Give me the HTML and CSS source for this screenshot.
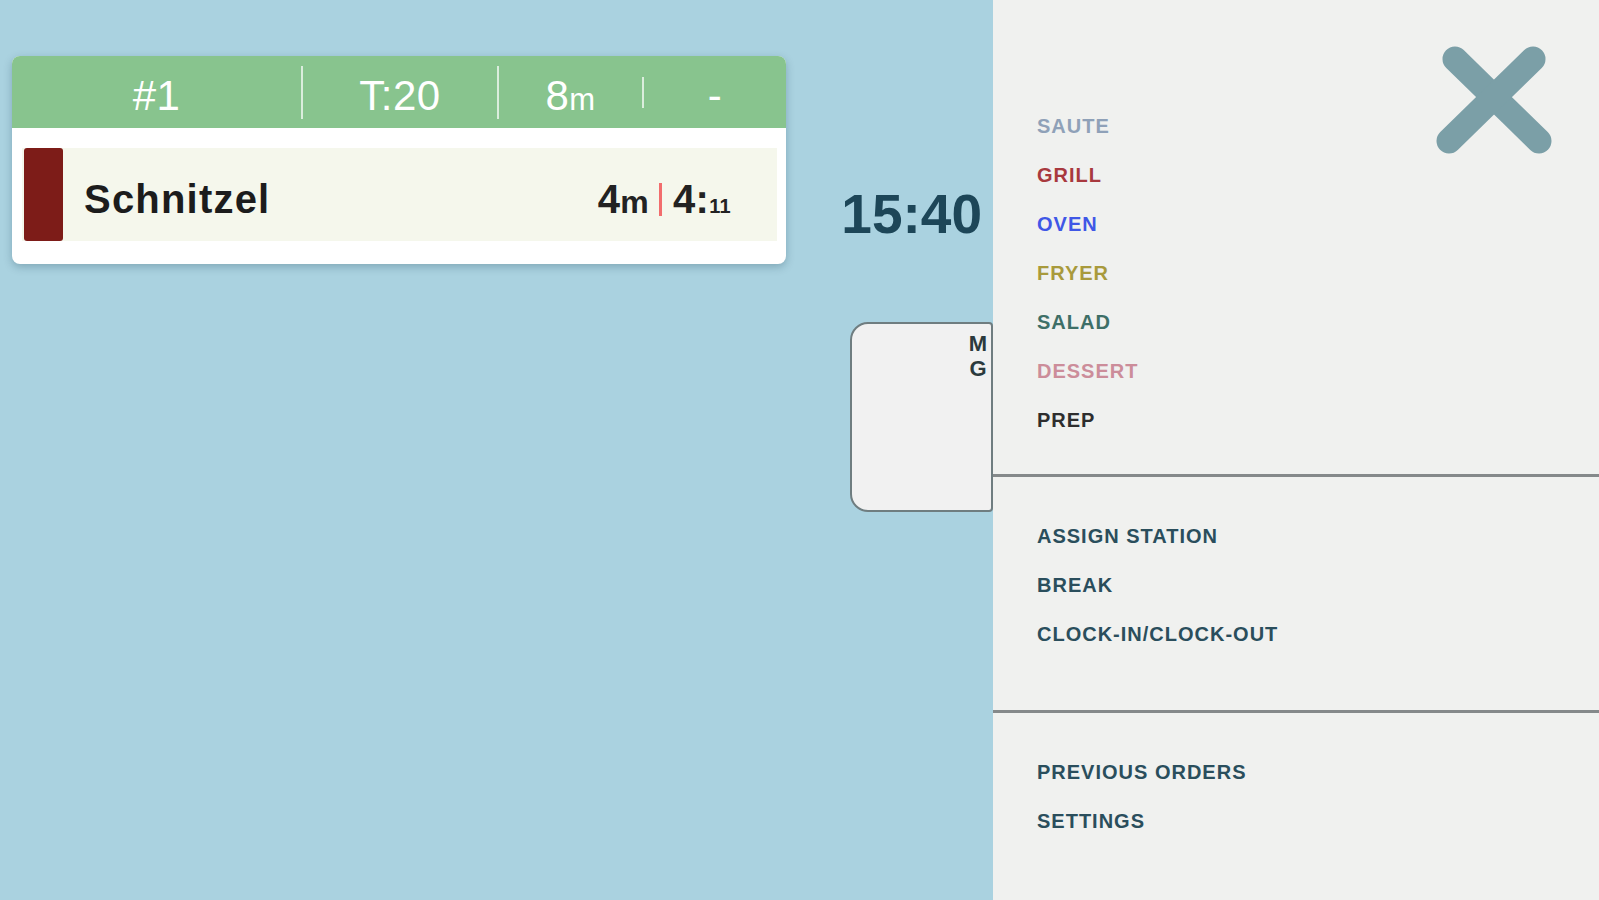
FILE: index.html
```html
<!DOCTYPE html>
<html lang="en">
<head>
<meta charset="utf-8">
<title>Kitchen display</title>
<link rel="stylesheet" href="styles.css">
</head>
<body>
<main class="board">
  <section class="ticket">
    <header class="ticket-head">
      <div class="cell c-num">#1</div>
      <span class="sep"></span>
      <div class="cell c-table">T:20</div>
      <span class="sep"></span>
      <div class="cell c-age">8<span class="unit">m</span></div>
      <span class="sep sep-short"></span>
      <div class="cell c-status">-</div>
    </header>
    <div class="ticket-body">
      <div class="item">
        <span class="item-bar"></span>
        <span class="item-name">Schnitzel</span>
        <span class="item-times">
          <span>4<span class="unit-m">m</span></span>
          <span class="tdiv"></span>
          <span>4:<span class="unit-s">11</span></span>
        </span>
      </div>
    </div>
  </section>
  <section class="col2">
    <div class="clock">15:40</div>
    <div class="tile">
      <span class="tile-tag">M</span>
      <span class="tile-tag">G</span>
    </div>
  </section>
</main>
<aside class="drawer">
  <svg class="close" width="118" height="110" viewBox="0 0 118 110" aria-label="Close">
    <line x1="20" y1="14" x2="104" y2="96" stroke="#7b9fa7" stroke-width="25" stroke-linecap="round"/>
    <line x1="98" y1="14" x2="14" y2="96" stroke="#7b9fa7" stroke-width="25" stroke-linecap="round"/>
  </svg>
  <nav class="group group-stations">
    <a class="menu-item st-saute">SAUTE</a>
    <a class="menu-item st-grill">GRILL</a>
    <a class="menu-item st-oven">OVEN</a>
    <a class="menu-item st-fryer">FRYER</a>
    <a class="menu-item st-salad">SALAD</a>
    <a class="menu-item st-dessert">DESSERT</a>
    <a class="menu-item st-prep">PREP</a>
  </nav>
  <nav class="group">
    <a class="menu-item">ASSIGN STATION</a>
    <a class="menu-item">BREAK</a>
    <a class="menu-item">CLOCK-IN/CLOCK-OUT</a>
  </nav>
  <nav class="group group-last">
    <a class="menu-item">PREVIOUS ORDERS</a>
    <a class="menu-item">SETTINGS</a>
  </nav>
</aside>
</body>
</html>
```
FILE: styles.css
```css
* { box-sizing: border-box; }
html, body { margin: 0; height: 100%; }
body {
  background: #aad2e0;
  font-family: "Liberation Sans", Arial, sans-serif;
  overflow: hidden;
}

.board {
  display: flex;
  align-items: flex-start;
  padding: 56px 0 0 12px;
  height: 900px;
}

.ticket {
  flex: none;
  width: 774px;
  background: #fff;
  border-radius: 8px;
  box-shadow: 0 3px 8px rgba(20, 60, 80, 0.28);
  overflow: hidden;
}
.ticket-head {
  display: flex;
  align-items: center;
  height: 72px;
  background: #88c48e;
  color: #fff;
}
.cell {
  flex: none;
  text-align: center;
  font-size: 42px;
  line-height: 1;
  letter-spacing: 0.5px;
  padding-top: 7px;
}
.c-num { width: 289px; }
.c-table { width: 194px; }
.c-age { width: 143px; }
.c-status { flex: 1; }
.unit { font-size: 31px; }
.sep {
  flex: none;
  width: 2px;
  height: 53px;
  background: rgba(255, 255, 255, 0.7);
}
.sep-short { height: 31px; }

.ticket-body { padding: 20px 9px 23px 10px; }
.item {
  display: flex;
  align-items: center;
  height: 93px;
  background: #f5f7ec;
  padding-right: 46px;
}
.item-bar {
  flex: none;
  width: 39px;
  height: 100%;
  margin-left: 2px;
  background: #7d1c18;
  border-radius: 3px;
}
.item-name {
  flex: 1;
  margin-left: 21px;
  padding-top: 9px;
  font-size: 40px;
  font-weight: bold;
  letter-spacing: 1.2px;
  color: #1c1c1c;
}
.item-times {
  display: flex;
  align-items: center;
  padding-top: 9px;
  font-size: 40px;
  font-weight: bold;
  color: #222;
  letter-spacing: 0.3px;
}
.unit-m { font-size: 32px; }
.unit-s { font-size: 20px; }
.tdiv {
  width: 3px;
  height: 33px;
  margin: 0 11px 0 10px;
  background: #f26d6d;
}

.col2 {
  flex: none;
  display: flex;
  flex-direction: column;
  align-items: flex-end;
  width: 151px;
  margin: 131px 0 0 56px;
}
.clock {
  margin-right: 11px;
  font-size: 55px;
  line-height: 55px;
  font-weight: bold;
  color: #1d4658;
}
.tile {
  display: flex;
  flex-direction: column;
  align-items: flex-end;
  width: 143px;
  height: 190px;
  margin-top: 80px;
  padding: 7px 1px 0 0;
  background: #f1f1f1;
  border: 2.5px solid #6f7d80;
  border-radius: 18px 4px 4px 18px;
}
.tile-tag {
  display: block;
  width: 24px;
  height: 25px;
  font-size: 22px;
  line-height: 25px;
  font-weight: bold;
  color: #2b3a3d;
  text-align: center;
}

.drawer {
  position: fixed;
  top: 0;
  right: 0;
  width: 606px;
  height: 100%;
  background: #f0f1ef;
}
.close {
  position: absolute;
  left: 442px;
  top: 45px;
}
.group {
  display: flex;
  flex-direction: column;
  padding: 35px 0 51px 44px;
  border-bottom: 3px solid #85898a;
}
.group-stations { padding-top: 102px; padding-bottom: 29px; }
.group-last { border-bottom: none; }
.menu-item {
  display: block;
  height: 49px;
  line-height: 49px;
  font-size: 20px;
  font-weight: bold;
  letter-spacing: 1px;
  color: #2a4e5c;
}
.st-saute { color: #8fa1b8; }
.st-grill { color: #a8393e; }
.st-oven { color: #3f57e6; }
.st-fryer { color: #a89a3c; }
.st-salad { color: #3e6f67; }
.st-dessert { color: #cc8d9a; }
.st-prep { color: #2e2e2e; }
```
